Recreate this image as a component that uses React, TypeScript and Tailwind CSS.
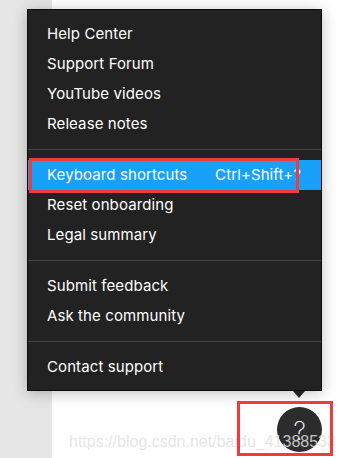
import React from 'react';

const groups: string[][] = [
  ['Help Center', 'Support Forum', 'YouTube videos', 'Release notes'],
  ['Keyboard shortcuts', 'Reset onboarding', 'Legal summary'],
  ['Submit feedback', 'Ask the community'],
  ['Contact support'],
];

const shortcuts: Record<string, string> = {
  'Keyboard shortcuts': 'Ctrl+Shift+?',
};

const App: React.FC = () => {
  return (
    <div
      className="relative w-[344px] h-[458px] overflow-hidden bg-white flex"
      style={{ fontFamily: 'Inter, "Noto Sans", sans-serif' }}
    >
      <div className="w-[52px] h-full bg-[#e6e6e6]" />

      {/* help menu */}
      <div className="absolute left-[27px] top-[9px] w-[295px] bg-[#222222] border border-[#0c0c0c] shadow-[0_2px_14px_rgba(0,0,0,0.25)] pt-[9px] pb-[8px]">
        {groups.map((items, gi) => (
          <div key={gi}>
            {gi > 0 && <div className="h-px bg-[#3f3f3f] my-[10px]" />}
            {items.map((label) => {
              const active = label === 'Keyboard shortcuts';
              return (
                <div
                  key={label}
                  className={`h-[30px] flex items-center pl-[19px] pr-[20px] text-[15px] tracking-[0.1px] text-white ${
                    active ? 'bg-[#18a0fb]' : ''
                  }`}
                >
                  <span className="whitespace-nowrap">{label}</span>
                  {shortcuts[label] && (
                    <span className="ml-auto whitespace-nowrap">{shortcuts[label]}</span>
                  )}
                </div>
              );
            })}
          </div>
        ))}
      </div>

      {/* pointer */}
      <div className="absolute left-[293px] top-[391px] w-0 h-0 border-l-[6px] border-r-[6px] border-t-[7px] border-l-transparent border-r-transparent border-t-[#222222]" />

      {/* help button */}
      <div className="absolute left-[277px] top-[407px] w-[45px] h-[45px] rounded-full bg-[#2c2c2c] flex items-center justify-center pt-[3px] text-white text-[25px] font-extralight leading-none">
        ?
      </div>

      {/* watermark */}
      <div
        className="absolute left-[69px] top-[430px] text-[16px] whitespace-nowrap text-[rgba(225,225,225,0.85)]"
        style={{ fontFamily: '"Liberation Sans", Arial, sans-serif' }}
      >
        https://blog.csdn.net/baidu_41388533
      </div>

      {/* annotation boxes */}
      <div className="absolute left-[29px] top-[158px] w-[270px] h-[35px] border-[3px] border-[#ef3b3b]" />
      <div className="absolute left-[237px] top-[401px] w-[96px] h-[55px] border-[3px] border-[#ef3b3b]" />
    </div>
  );
};

export default App;
